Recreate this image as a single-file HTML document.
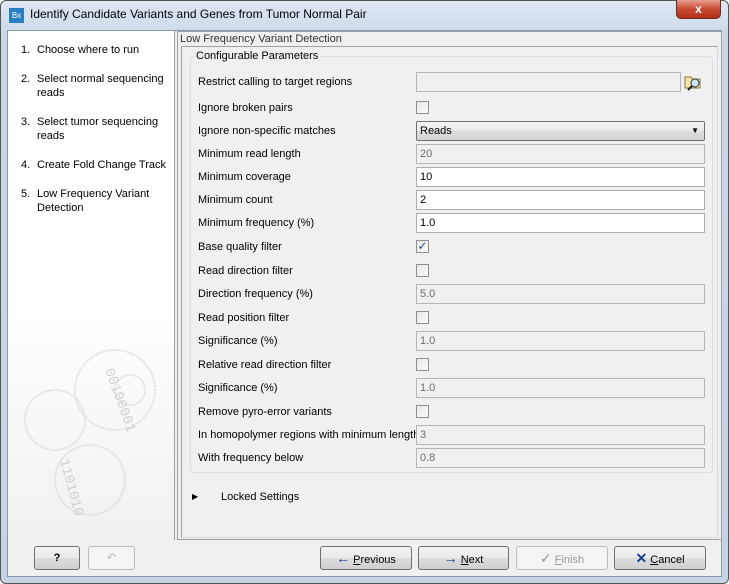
<!DOCTYPE html>
<html><head><meta charset="utf-8"><style>
*{box-sizing:border-box;margin:0;padding:0}
body{width:729px;height:584px;background:#fff;font-family:"Liberation Sans",sans-serif;font-size:11px;color:#000;position:relative;overflow:hidden}
.a{position:absolute}
.frame{left:0;top:0;width:729px;height:584px;border:1px solid #555;border-radius:6px;background:linear-gradient(#dfe8f3,#c9d6e6 40px,#c5d3e4);}
.inner{left:7px;top:30px;width:715px;height:547px;background:#f0f0f0;border:1px solid #8a98a8}
.lbl{left:198px;font-size:11px;color:#000}
.inp{left:416px;width:289px;height:20px;border:1px solid #abadb3;background:#fff;padding:3px 3px;font-size:11px}
.dis{background:#f0f0f0;color:#6d6d6d;border-color:#b5b5b5}
.cb{left:416px;width:13px;height:13px;border:1px solid #8f8f8f;background:linear-gradient(135deg,#e8e8e8,#fafafa)}
.btn{height:24px;border:1px solid #707070;border-radius:3px;background:linear-gradient(#f2f2f2,#ebebeb 50%,#dddddd 51%,#cfcfcf);text-align:center;font-size:11px;line-height:22px}
.step{left:21px;font-size:11px;line-height:14px}
.step span{position:absolute;left:16px;width:135px}
</style></head><body>
<div class="a frame"></div>
<div class="a" style="left:9px;top:8px;width:15px;height:15px;background:#2a7fc4;color:#fff;font-size:8px;line-height:15px;text-align:center">Bx</div>
<div class="a" style="left:30px;top:7px;font-size:12px;color:#000">Identify Candidate Variants and Genes from Tumor Normal Pair</div>
<div class="a" style="left:676px;top:0;width:45px;height:19px;border:1px solid #6b2a22;border-top:none;border-radius:0 0 5px 5px;background:linear-gradient(#e8a090,#c84a32 50%,#b32d18);color:#fff;font-weight:bold;font-size:12px;text-align:center;line-height:18px">x</div>
<div class="a inner"></div>
<div class="a" style="left:8px;top:31px;width:167px;height:509px;background:linear-gradient(#fff 55%,#f0f0f0);border-right:1px solid #a0a0a0"></div>
<svg class="a" style="left:10px;top:340px" width="160" height="200">
<g fill="none" stroke="#d8d8d8" stroke-width="2" stroke-dasharray="1 1"><circle cx="45" cy="80" r="30"/><circle cx="80" cy="140" r="35"/><circle cx="105" cy="50" r="40"/><circle cx="120" cy="50" r="15"/></g>
<g fill="#d0d0d0" font-size="14" font-family="Liberation Mono"><text transform="translate(95,30) rotate(70)">00100001</text><text transform="translate(50,120) rotate(75)">1101010</text></g></svg>
<div class="a step" style="top:43px">1.<span>Choose where to run</span></div>
<div class="a step" style="top:72px">2.<span>Select normal sequencing reads</span></div>
<div class="a step" style="top:115px">3.<span>Select tumor sequencing reads</span></div>
<div class="a step" style="top:158px">4.<span>Create Fold Change Track</span></div>
<div class="a step" style="top:187px">5.<span>Low Frequency Variant Detection</span></div>
<div class="a" style="left:177px;top:31px;width:545px;height:509px;border:1px solid #a0a0a0;background:#f0f0f0"></div>
<div class="a" style="left:180px;top:33px;font-size:11px;color:#333">Low Frequency Variant Detection</div>
<div class="a" style="left:181px;top:46px;width:537px;height:492px;border:1px solid #a0a0a0;border-right-color:#d8d8d8;border-bottom-color:#d8d8d8"></div>
<div class="a" style="left:190px;top:56px;width:523px;height:417px;border:1px solid #d5dfe5;border-radius:4px"></div>
<div class="a" style="left:194px;top:50px;background:#f0f0f0;padding:0 2px">Configurable Parameters</div>
<div class="a lbl" style="top:76px">Restrict calling to target regions</div>
<div class="a inp dis" style="top:72px;width:265px"></div>
<svg class="a" style="left:684px;top:73px" width="18" height="18"><path d="M1 4h6l1 2h8v9H1z" fill="#f5e6a8" stroke="#8a7a40"/><circle cx="11" cy="10" r="4" fill="#cfe4f5" stroke="#334"/><path d="M8 13l-4 4" stroke="#222" stroke-width="2"/></svg>
<div class="a lbl" style="top:102px">Ignore broken pairs</div><div class="a cb" style="top:101px"></div>
<div class="a lbl" style="top:125px">Ignore non-specific matches</div>
<div class="a inp" style="top:121px;background:linear-gradient(#f4f4f4,#e8e8e8 50%,#dcdcdc 51%,#d5d5d5);border-color:#707070;border-radius:2px;padding-top:3px">Reads<span style="position:absolute;right:5px;top:4px;font-size:8px">▼</span></div>
<div class="a lbl" style="top:148px">Minimum read length</div><div class="a inp dis" style="top:144px">20</div>
<div class="a lbl" style="top:171px">Minimum coverage</div><div class="a inp" style="top:167px">10</div>
<div class="a lbl" style="top:194px">Minimum count</div><div class="a inp" style="top:190px">2</div>
<div class="a lbl" style="top:217px">Minimum frequency (%)</div><div class="a inp" style="top:213px">1.0</div>
<div class="a lbl" style="top:241px">Base quality filter</div><div class="a cb" style="top:240px;color:#2a4aa0;font-size:12px;line-height:11px;text-align:center">✓</div>
<div class="a lbl" style="top:265px">Read direction filter</div><div class="a cb" style="top:264px"></div>
<div class="a lbl" style="top:288px">Direction frequency (%)</div><div class="a inp dis" style="top:284px">5.0</div>
<div class="a lbl" style="top:312px">Read position filter</div><div class="a cb" style="top:311px"></div>
<div class="a lbl" style="top:335px">Significance (%)</div><div class="a inp dis" style="top:331px">1.0</div>
<div class="a lbl" style="top:359px">Relative read direction filter</div><div class="a cb" style="top:358px"></div>
<div class="a lbl" style="top:382px">Significance (%)</div><div class="a inp dis" style="top:378px">1.0</div>
<div class="a lbl" style="top:406px">Remove pyro-error variants</div><div class="a cb" style="top:405px"></div>
<div class="a lbl" style="top:429px">In homopolymer regions with minimum length</div><div class="a inp dis" style="top:425px">3</div>
<div class="a lbl" style="top:452px">With frequency below</div><div class="a inp dis" style="top:448px">0.8</div>
<div class="a" style="left:192px;top:492px;font-size:8px">▶</div>
<div class="a" style="left:221px;top:491px">Locked Settings</div>
<div class="a btn" style="left:34px;top:546px;width:46px;font-weight:bold">?</div>
<div class="a btn" style="left:88px;top:546px;width:47px;border-color:#bcbcbc;background:#f4f4f4;color:#bbb">↶</div>
<div class="a btn" style="left:320px;top:546px;width:92px"><b style="color:#1a3a8a;font-size:14px">←</b> <u>P</u>revious</div>
<div class="a btn" style="left:418px;top:546px;width:91px"><b style="color:#1a3a8a;font-size:14px">→</b> <u>N</u>ext</div>
<div class="a btn" style="left:516px;top:546px;width:92px;border-color:#bcbcbc;background:#f4f4f4;color:#999"><span style="font-size:14px">✓</span> <u>F</u>inish</div>
<div class="a btn" style="left:614px;top:546px;width:92px"><b style="color:#1a3a8a;font-size:14px">✕</b> <u>C</u>ancel</div>
</body></html>
